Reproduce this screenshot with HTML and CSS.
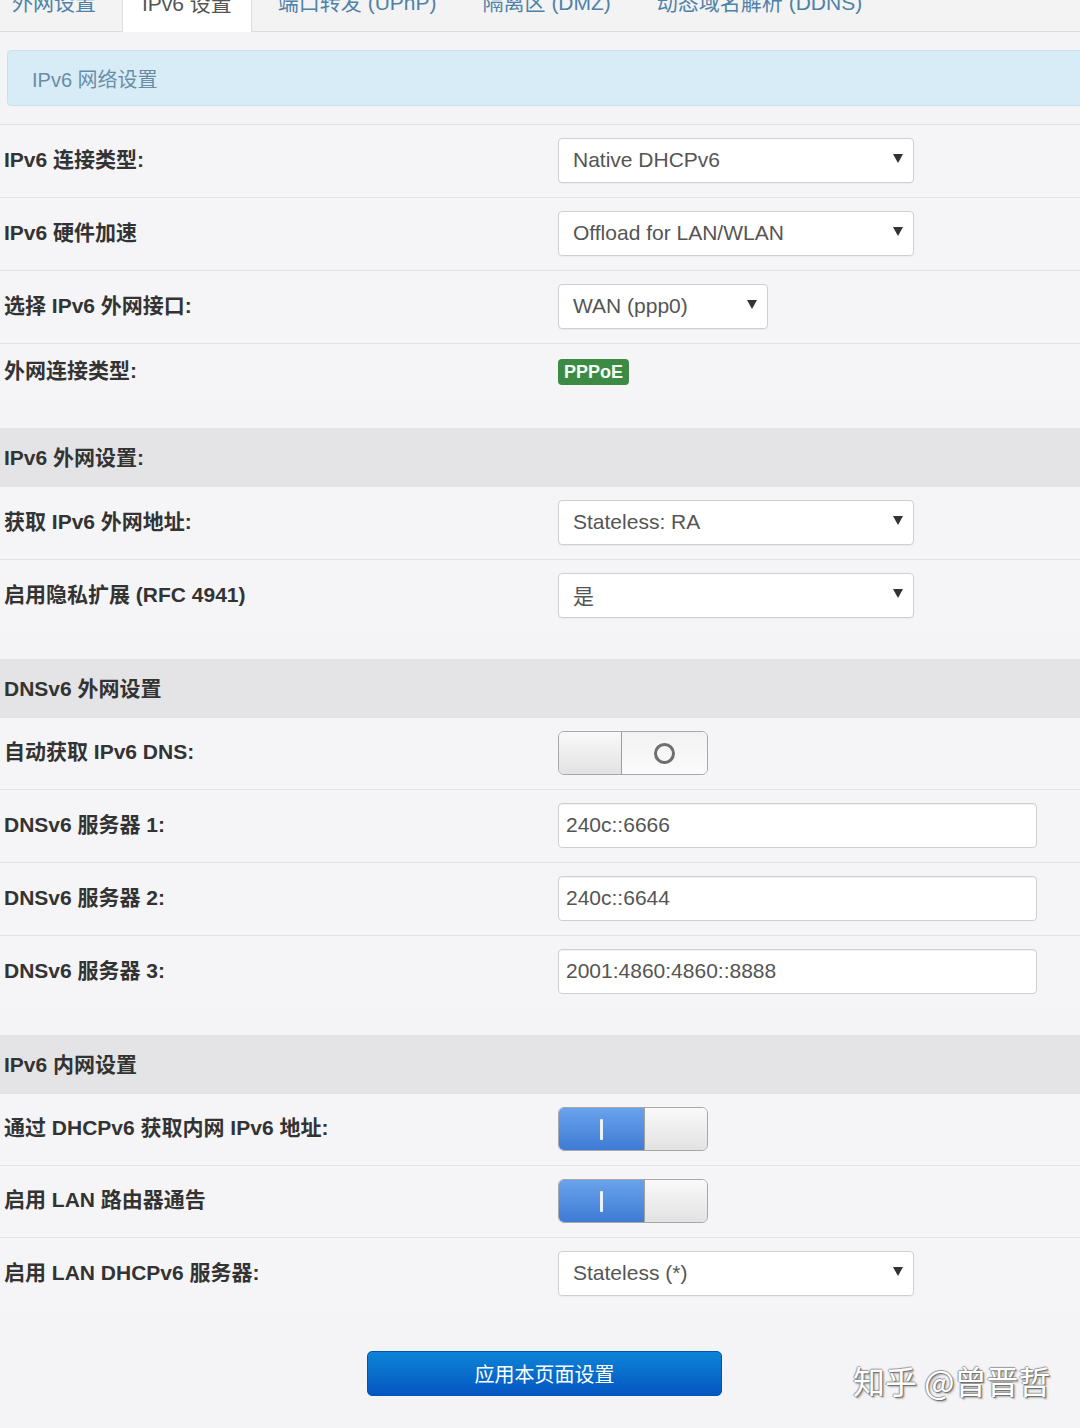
FILE: index.html
```html
<!DOCTYPE html>
<html lang="zh-CN">
<head>
<meta charset="utf-8">
<title>IPv6 设置</title>
<link rel="stylesheet" href="styles.css">
</head>
<body>
<div class="page">
  <div class="tabs">
    <a class="tab first">外网设置</a>
    <a class="tab active">IPv6 设置</a>
    <a class="tab">端口转发 (UPnP)</a>
    <a class="tab">隔离区 (DMZ)</a>
    <a class="tab">动态域名解析 (DDNS)</a>
  </div>

  <div class="alert">IPv6 网络设置</div>

  <div class="section">
    <div class="row">
      <div class="label">IPv6 连接类型:</div>
      <div class="ctrl"><div class="select w356"><span>Native DHCPv6</span><i class="caret"></i></div></div>
    </div>
    <div class="row">
      <div class="label">IPv6 硬件加速</div>
      <div class="ctrl"><div class="select w356"><span>Offload for LAN/WLAN</span><i class="caret"></i></div></div>
    </div>
    <div class="row">
      <div class="label">选择 IPv6 外网接口:</div>
      <div class="ctrl"><div class="select w210"><span>WAN (ppp0)</span><i class="caret"></i></div></div>
    </div>
    <div class="row text-row">
      <div class="label">外网连接类型:</div>
      <div class="ctrl"><span class="badge">PPPoE</span></div>
    </div>
  </div>

  <div class="section">
    <div class="head">IPv6 外网设置:</div>
    <div class="row">
      <div class="label">获取 IPv6 外网地址:</div>
      <div class="ctrl"><div class="select w356"><span>Stateless: RA</span><i class="caret"></i></div></div>
    </div>
    <div class="row">
      <div class="label">启用隐私扩展 (RFC 4941)</div>
      <div class="ctrl"><div class="select w356"><span>是</span><i class="caret"></i></div></div>
    </div>
  </div>

  <div class="section">
    <div class="head">DNSv6 外网设置</div>
    <div class="row">
      <div class="label">自动获取 IPv6 DNS:</div>
      <div class="ctrl">
        <div class="switch off"><span class="knob"></span><span class="lbl"><i class="ring"></i></span></div>
      </div>
    </div>
    <div class="row">
      <div class="label">DNSv6 服务器 1:</div>
      <div class="ctrl"><div class="input">240c::6666</div></div>
    </div>
    <div class="row">
      <div class="label">DNSv6 服务器 2:</div>
      <div class="ctrl"><div class="input">240c::6644</div></div>
    </div>
    <div class="row">
      <div class="label">DNSv6 服务器 3:</div>
      <div class="ctrl"><div class="input">2001:4860:4860::8888</div></div>
    </div>
  </div>

  <div class="section">
    <div class="head">IPv6 内网设置</div>
    <div class="row">
      <div class="label">通过 DHCPv6 获取内网 IPv6 地址:</div>
      <div class="ctrl">
        <div class="switch on"><span class="lbl"><i class="bar"></i></span><span class="knob"></span></div>
      </div>
    </div>
    <div class="row">
      <div class="label">启用 LAN 路由器通告</div>
      <div class="ctrl">
        <div class="switch on"><span class="lbl"><i class="bar"></i></span><span class="knob"></span></div>
      </div>
    </div>
    <div class="row">
      <div class="label">启用 LAN DHCPv6 服务器:</div>
      <div class="ctrl"><div class="select w356"><span>Stateless (*)</span><i class="caret"></i></div></div>
    </div>
  </div>

  <div class="actions">
    <button class="apply">应用本页面设置</button>
  </div>

  <div class="watermark">知乎 @曾晋哲</div>
</div>
</body>
</html>
```

FILE: styles.css
```css
* { box-sizing: border-box; }

html, body {
  margin: 0;
  padding: 0;
  background: #f4f4f6;
}

body {
  font-family: "Liberation Sans", "Noto Sans CJK SC", sans-serif;
  color: #333;
  width: 1080px;
  height: 1428px;
  overflow: hidden;
}

.page {
  position: relative;
  height: 1428px;
  padding-top: 1px;
}

/* Tabs */
.tabs {
  display: flex;
  gap: 6px;
  height: 48px;
  margin-top: -17px;
  margin-left: -8px;
  background: #f3f3f3;
  border-bottom: 1px solid #dcdcdc;
}

.tab {
  display: block;
  padding: 0 20px;
  height: 48px;
  line-height: 38px;
  font-size: 21px;
  color: #4f82a8;
  white-space: nowrap;
}

.tab.active {
  padding: 0 19px;
  background: #ffffff;
  color: #555;
  border: 1px solid #dedede;
  border-bottom: none;
}

/* Alert */
.alert {
  margin: 18px -10px 18px 7px;
  height: 56px;
  padding-left: 24px;
  display: flex;
  align-items: center;
  background: #d8ecf7;
  border: 1px solid #c6e2ef;
  border-radius: 4px;
  color: #6a8ca6;
  font-size: 20px;
}

/* Sections */
.section {
  margin-bottom: 27px;
}

.head {
  height: 58px;
  display: flex;
  align-items: center;
  padding-left: 4px;
  padding-bottom: 3px;
  background: #e4e4e6;
  font-size: 21px;
  font-weight: bold;
  color: #333;
}

.row {
  display: grid;
  grid-template-columns: 558px 1fr;
  align-items: center;
  padding: 13px 0 14px;
  border-top: 1px solid #e2e2e4;
  background: #f5f5f7;
}

.row.text-row .ctrl {
  height: 30px;
  display: flex;
  align-items: center;
}

.label {
  padding-left: 4px;
  margin-top: -2px;
  font-size: 21px;
  line-height: 30px;
  font-weight: bold;
  color: #333;
  white-space: nowrap;
}

.ctrl {
  display: flex;
  align-items: center;
}

/* Select */
.select {
  height: 45px;
  display: flex;
  align-items: center;
  justify-content: space-between;
  padding: 0 10px 0 14px;
  background: #fff;
  border: 1px solid #cfcfcf;
  border-radius: 4px;
  font-size: 21px;
  color: #555;
  box-shadow: 0 1px 1px rgba(0,0,0,0.04);
}

.select span {
  padding-bottom: 2px;
}

.w356 { width: 356px; }
.w210 { width: 210px; }

.caret {
  display: block;
  width: 0;
  height: 0;
  border-left: 5px solid transparent;
  border-right: 5px solid transparent;
  border-top: 9px solid #333;
  margin-top: -4px;
}

/* Input */
.input {
  width: 479px;
  height: 45px;
  display: flex;
  align-items: center;
  padding-left: 7px;
  padding-bottom: 2px;
  background: #fff;
  border: 1px solid #cfcfcf;
  border-radius: 4px;
  font-size: 21px;
  color: #555;
  box-shadow: inset 0 1px 1px rgba(0,0,0,0.06);
}

/* Badge */
.badge {
  display: inline-block;
  height: 26px;
  line-height: 26px;
  padding: 0 6px;
  background: #3d8a44;
  color: #f4fff4;
  font-weight: bold;
  font-size: 18px;
  border-radius: 4px;
}

/* Switch */
.switch {
  display: flex;
  width: 150px;
  height: 44px;
  border: 1px solid #a8a8a8;
  border-radius: 6px;
  overflow: hidden;
}

.switch .knob {
  display: block;
  width: 63px;
  height: 100%;
  background: linear-gradient(#f9f9f9, #e2e2e2);
}

.switch .lbl {
  display: flex;
  align-items: center;
  justify-content: center;
  flex: 1;
  height: 100%;
}

.switch.off .knob {
  border-right: 1px solid #9c9c9c;
}

.switch.off .lbl {
  background: linear-gradient(#f2f2f2, #fbfbfb);
}

.switch.on .knob {
  border-left: 1px solid #a0a0a0;
}

.switch.on .lbl {
  background: linear-gradient(#6aa2ea, #3e7bd6);
}

.ring {
  display: block;
  width: 21px;
  height: 21px;
  border: 3px solid #6e6e6e;
  border-radius: 50%;
}

.bar {
  display: block;
  width: 3px;
  height: 21px;
  background: #eaf4ff;
  border-radius: 1px;
}

/* Actions */
.actions {
  display: flex;
  justify-content: center;
  padding-left: 9px;
  margin-top: 41px;
}

.apply {
  width: 355px;
  height: 45px;
  border: 1px solid #0553b0;
  border-radius: 5px;
  background: linear-gradient(#0d84d6, #0456c2);
  color: #fff;
  font-family: "Noto Sans CJK SC", sans-serif;
  font-size: 20px;
}

/* Watermark */
.watermark {
  position: absolute;
  left: 853px;
  top: 1358px;
  font-family: "Noto Sans CJK SC", sans-serif;
  font-size: 32px;
  line-height: 44px;
  color: #ffffff;
  text-shadow: 1px 1px 1px #6a6a6a, -1px 0 1px #9a9a9a, 0 -1px 1px #9a9a9a, 2px 2px 2px rgba(0,0,0,0.25);
  white-space: nowrap;
}
```
